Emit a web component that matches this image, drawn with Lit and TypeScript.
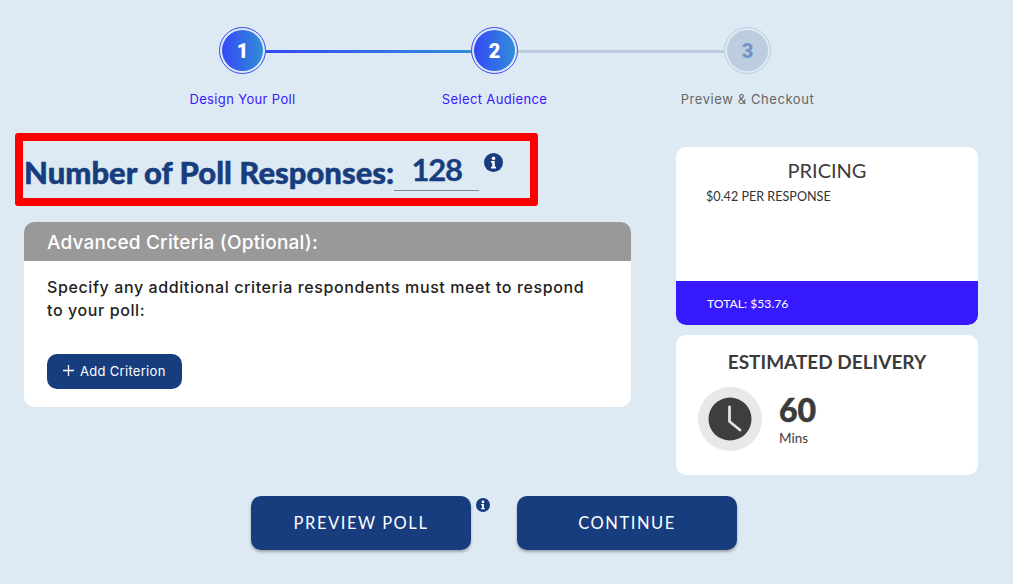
import { LitElement, html, css } from "lit";
import { customElement } from "lit/decorators.js";

const info = (size: number) => html`<svg class="info" width=${size} height=${size} viewBox="0 0 20 20" aria-hidden="true">
  <circle cx="10" cy="10" r="10" fill="#173d7f"></circle>
  <circle cx="10" cy="5.6" r="1.9" fill="#fff"></circle>
  <path d="M7.4 8.4h3.9v6h1.3v1.8H7.4v-1.8h1.3v-4.2H7.4z" fill="#fff"></path>
</svg>`;

@customElement("app-root")
export class AppRoot extends LitElement {
  static styles = css`
    :host { display: block; width: 1013px; height: 584px; background: #deeaf3; overflow: hidden; font-family: Inter, "Noto Sans", sans-serif; color: #333; }
    .stepper { display: flex; height: 133px; padding: 27px 0 0 219px; box-sizing: border-box; }
    .step { width: 47px; display: flex; flex-direction: column; align-items: center; flex: none; }
    .track { flex: none; width: 206px; height: 3px; margin: 23px -1px 0 0; background: linear-gradient(90deg, #3548f5, #318ed9); }
    .track.off { background: #bccde0; width: 207px; }
    .ring { width: 47px; height: 47px; box-sizing: border-box; border-radius: 50%; border: 1px solid #3548f5; padding: 2px; flex: none; background: #deeaf3; position: relative; }
    .ring.off { border-color: #bccde0; }
    .dot { width: 100%; height: 100%; border-radius: 50%; background: linear-gradient(90deg, #3548f5, #318ed9); color: #fff; display: flex; align-items: center; justify-content: center; font: 900 20px Roboto, sans-serif; }
    .ring.off .dot { background: #bccde0; color: #7195c6; }
    .lbl { margin-top: 17px; white-space: nowrap; font-size: 13px; font-weight: 400; color: #3719ff; line-height: 16px; letter-spacing: .36px; }
    .lbl.off { color: #666; letter-spacing: .58px; }
    .main { display: flex; justify-content: space-between; padding: 0 35px 0 15px; height: 363px; }
    .left { width: 616px; }
    .highlight { width: 523px; height: 73px; box-sizing: border-box; border: 8px solid #f00; border-radius: 3px; margin-bottom: 16px; display: flex; align-items: flex-start; padding-top: 9px; }
    .highlight h1 { margin: 0 0 0 1px; font: 900 31px/44px Lato, sans-serif; color: #173d7f; white-space: nowrap; -webkit-text-stroke: .5px #173d7f; }
    .qty { width: 85px; height: 40px; border-bottom: 1px solid #7d8b9c; text-align: center; font: 700 31px/39px Lato, sans-serif; color: #173d7f; letter-spacing: -1.2px; -webkit-text-stroke: .3px #173d7f; }
    .highlight .info { margin: 3px 0 0 5px; }
    .card { background: #fff; border-radius: 10px; overflow: hidden; }
    .criteria { margin-left: 9px; width: 607px; height: 185px; }
    .criteria header { background: #999; color: #fff; height: 39px; padding-left: 23px; font-size: 19px; font-weight: 500; line-height: 41px; letter-spacing: .2px; }
    .criteria p { margin: 15px 40px 0 23px; font-size: 16px; line-height: 23px; color: #222; font-weight: 450; letter-spacing: .6px; }
    .add { margin: 32px 0 0 23px; width: 135px; height: 35px; border-radius: 10px; border: 0; background: #173d7f; color: #fff; display: flex; align-items: center; gap: 5px; padding: 0 0 2px 15px; font: 400 13px Inter, sans-serif; letter-spacing: .3px; }
    .right { width: 302px; padding-top: 14px; display: flex; flex-direction: column; gap: 10px; font-family: Lato, sans-serif; }
    .pricing { height: 178px; display: flex; flex-direction: column; }
    .pricing h2 { margin: 11px 0 0; text-align: center; font-size: 20px; font-weight: 400; color: #3b3b3b; line-height: 24px; }
    .rate { margin: 7px 0 0 30px; font-size: 12.6px; line-height: 16px; color: #333; }
    .total { margin-top: auto; height: 44px; background: #3719ff; color: #fff; padding-left: 31px; font-size: 12.2px; line-height: 45px; }
    .delivery { height: 140px; }
    .delivery h2 { margin: 15px 0 0; text-align: center; font-size: 19px; font-weight: 700; color: #3b3b3b; line-height: 24px; }
    .eta { display: flex; margin: 13px 0 0 22px; gap: 17px; }
    .eta .t { display: flex; flex-direction: column; }
    .num { font-size: 32px; line-height: 36px; font-weight: 900; color: #3b3b3b; margin-top: 5px; -webkit-text-stroke: .5px #3b3b3b; }
    .mins { font-size: 13.5px; line-height: 18px; margin-top: 1px; color: #3b3b3b; }
    .actions { display: flex; padding-left: 251px; }
    .btn { width: 220px; height: 54px; border: 0; border-radius: 10px; background: #173d7f; color: #fff; font: 400 16.5px Lato, sans-serif; letter-spacing: 1.55px; box-shadow: 0 2px 3px rgba(0,0,0,.3); padding: 0; }
    .slot { position: relative; width: 266px; }
    .slot .info { position: absolute; left: 225px; top: 2px; }
  `;

  render() {
    return html`
      <div class="stepper">
        <div class="step">
          <div class="ring"><div class="dot">1</div></div><span class="lbl">Design Your Poll</span>
        </div>
        <div class="track"></div>
        <div class="step">
          <div class="ring"><div class="dot">2</div></div><span class="lbl">Select Audience</span>
        </div>
        <div class="track off"></div>
        <div class="step">
          <div class="ring off"><div class="dot">3</div></div><span class="lbl off">Preview &amp; Checkout</span>
        </div>
      </div>
      <div class="main">
        <div class="left">
          <div class="highlight">
            <h1>Number of Poll Responses:</h1>
            <div class="qty">128</div>
            ${info(19)}
          </div>
          <section class="card criteria">
            <header>Advanced Criteria (Optional):</header>
            <p>Specify any additional criteria respondents must meet to respond to your poll:</p>
            <button class="add">
              <svg width="13" height="13" viewBox="0 0 13 13"><path d="M6.5 1v11M1 6.5h11" stroke="#fff" stroke-width="1.3"></path></svg>
              Add Criterion
            </button>
          </section>
        </div>
        <div class="right">
          <section class="card pricing">
            <h2>PRICING</h2>
            <div class="rate">$0.42 PER RESPONSE</div>
            <div class="total">TOTAL: $53.76</div>
          </section>
          <section class="card delivery">
            <h2>ESTIMATED DELIVERY</h2>
            <div class="eta">
              <svg width="64" height="64" viewBox="0 0 64 64">
                <circle cx="32" cy="32" r="32" fill="#e8e8e8"></circle>
                <circle cx="32" cy="32" r="21.5" fill="#3d3f3c"></circle>
                <path d="M31.5 20v14.5L42 43" fill="none" stroke="#e2e2e2" stroke-width="2.8" stroke-linecap="round" stroke-linejoin="round"></path>
              </svg>
              <div class="t"><span class="num">60</span><span class="mins">Mins</span></div>
            </div>
          </section>
        </div>
      </div>
      <div class="actions">
        <div class="slot"><button class="btn">PREVIEW POLL</button>${info(14)}</div>
        <button class="btn">CONTINUE</button>
      </div>
    `;
  }
}
